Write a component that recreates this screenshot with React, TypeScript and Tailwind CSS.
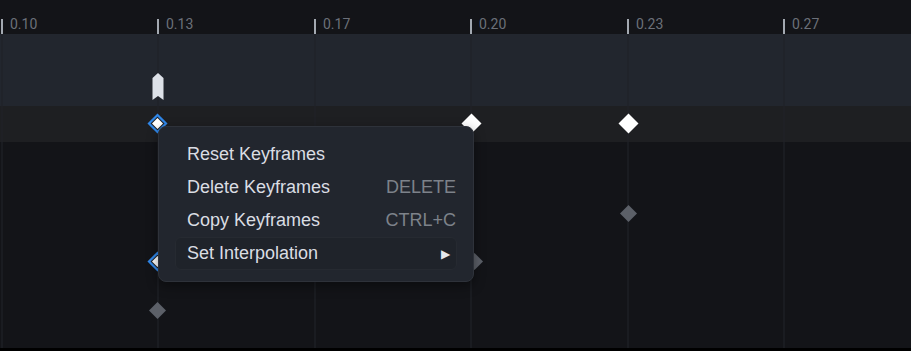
const ticks = [
  { x: 2, label: '0.10' },
  { x: 158, label: '0.13' },
  { x: 315, label: '0.17' },
  { x: 471, label: '0.20' },
  { x: 628, label: '0.23' },
  { x: 784, label: '0.27' },
];

type Key = { x: number; y: number; kind: 'white' | 'gray' | 'selected' };

const keys: Key[] = [
  { x: 157, y: 123, kind: 'selected' },
  { x: 471, y: 123, kind: 'white' },
  { x: 628, y: 123, kind: 'white' },
  { x: 628, y: 213, kind: 'gray' },
  { x: 157, y: 261, kind: 'selected' },
  { x: 474, y: 261, kind: 'gray' },
  { x: 157, y: 310, kind: 'gray' },
];

const Diamond = ({ k }: { k: Key }) => {
  const size = 21;
  return (
    <svg
      className="absolute"
      style={{ left: k.x - size / 2, top: k.y - size / 2 }}
      width={size}
      height={size}
      viewBox="0 0 21 21"
    >
      {k.kind === 'white' && <polygon points="10.5,0.5 20.5,10.5 10.5,20.5 0.5,10.5" fill="#ffffff" />}
      {k.kind === 'gray' && <polygon points="10.5,2 19,10.5 10.5,19 2,10.5" fill="#5c6068" />}
      {k.kind === 'selected' && (
        <>
          <polygon points="10.5,2 19,10.5 10.5,19 2,10.5" fill="#1e1f22" stroke="#2f86e8" strokeWidth="2.2" />
          <polygon points="10.5,5 16,10.5 10.5,16 5,10.5" fill="#ffffff" />
        </>
      )}
    </svg>
  );
};

const items = [
  { label: 'Reset Keyframes', hint: '' },
  { label: 'Delete Keyframes', hint: 'DELETE' },
  { label: 'Copy Keyframes', hint: 'CTRL+C' },
  { label: 'Set Interpolation', hint: 'arrow' },
];

export default function App() {
  return (
    <div className="w-[911px] h-[351px] bg-black overflow-hidden font-['Roboto',sans-serif]">
      <div className="relative w-full h-[348px] flex flex-col bg-[#131418]">
        {/* ruler + track bands */}
        <div className="h-[34px] shrink-0 bg-[#131418]" />
        <div className="h-[72px] shrink-0 bg-[#22262e]" />
        <div className="h-[36px] shrink-0 bg-[#1e1f22]" />
        <div className="flex-1 bg-[#131418]" />

        {/* grid lines + ticks */}
        {ticks.map((t) => (
          <div key={t.label}>
            <div className="absolute top-[34px] bottom-0 w-[2px] bg-[#1f2228]/60" style={{ left: t.x - 1 }} />
            <div className="absolute top-[19px] h-[15px] w-[2px] bg-[#a3a9b1]" style={{ left: t.x - 1 }} />
            <span
              className="absolute top-[15px] text-[14px] leading-[18px] text-[#6b7079]"
              style={{ left: t.x + 8 }}
            >
              {t.label}
            </span>
          </div>
        ))}

        {/* playhead marker */}
        <svg className="absolute left-[152px] top-[73px]" width="12" height="28" viewBox="0 0 12 28">
          <polygon points="6,0 11.5,5 11.5,27 6,23 0.5,27 0.5,5" fill="#dde1e8" />
        </svg>

        {keys.map((k, i) => (
          <Diamond key={i} k={k} />
        ))}

        {/* context menu */}
        <div className="absolute left-[158px] top-[126px] w-[316px] h-[156px] rounded-[8px] bg-[#22262e] border border-[#2e323a] shadow-[0_4px_12px_rgba(0,0,0,0.4)] px-[16px] pt-[11px] font-['Liberation_Sans',Arial,sans-serif]">
          {items.map((it) => (
            <div
              key={it.label}
              className={`flex items-center justify-between h-[33px] pl-[11px] rounded-[6px] text-[18px] text-[#dadde3] ${
                it.hint === 'arrow' ? 'bg-[#1f232a] border border-[#262a31]' : 'border border-transparent'
              }`}
            >
              <span>{it.label}</span>
              {it.hint === 'arrow' ? (
                <span className="mr-[6px] text-[12px] text-[#e6e8ec]">▶</span>
              ) : (
                <span className="text-[#7d828a]">{it.hint}</span>
              )}
            </div>
          ))}
        </div>
      </div>
    </div>
  );
}
